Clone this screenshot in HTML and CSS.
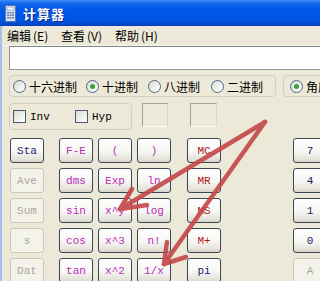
FILE: index.html
```html
<!DOCTYPE html>
<html>
<head>
<meta charset="utf-8">
<link rel="stylesheet" href="styles.css">
</head>
<body>
<div class="window">
  <div class="titlebar">
    <svg class="appicon" width="11" height="17" viewBox="0 0 11 17">
      <rect x="0.5" y="0.5" width="10" height="16" rx="1" fill="#d4e0f0" stroke="#5a78a8"/>
      <rect x="2" y="2" width="7" height="3" fill="#f4f8ff" stroke="#7890b8" stroke-width="0.6"/>
      <g fill="#6a84b0">
        <rect x="2" y="7" width="2" height="1.5"/><rect x="4.5" y="7" width="2" height="1.5"/><rect x="7" y="7" width="2" height="1.5"/>
        <rect x="2" y="9.5" width="2" height="1.5"/><rect x="4.5" y="9.5" width="2" height="1.5"/><rect x="7" y="9.5" width="2" height="1.5"/>
        <rect x="2" y="12" width="2" height="1.5"/><rect x="4.5" y="12" width="2" height="1.5"/><rect x="7" y="12" width="2" height="1.5"/>
      </g>
    </svg>
    <span class="title">计算器</span>
  </div>
  <div class="main">
    <div class="menubar">
      <span class="menu">编辑<span class="acc">(E)</span></span>
      <span class="menu">查看<span class="acc">(V)</span></span>
      <span class="menu">帮助<span class="acc">(H)</span></span>
    </div>
    <div class="content">
      <div class="display"></div>
      <div class="row radios">
        <div class="group base">
          <label class="radio w73"><span class="circle"></span>十六进制</label>
          <label class="radio w62"><span class="circle on"></span>十进制</label>
          <label class="radio w63"><span class="circle"></span>八进制</label>
          <label class="radio"><span class="circle"></span>二进制</label>
        </div>
        <div class="group angle">
          <label class="radio"><span class="circle on"></span>角度</label>
        </div>
      </div>
      <div class="row second">
        <div class="group invhyp">
          <label class="check w62"><span class="box"></span>Inv</label>
          <label class="check"><span class="box"></span>Hyp</label>
        </div>
        <div class="sunken s1"></div>
        <div class="sunken s2"></div>
      </div>
      <div class="keys">
        <div class="col stat">
          <div class="btn blue">Sta</div>
          <div class="btn off">Ave</div>
          <div class="btn off">Sum</div>
          <div class="btn off">s</div>
          <div class="btn off">Dat</div>
        </div>
        <div class="sci">
          <div class="btn pink">F-E</div>
          <div class="btn pink">(</div>
          <div class="btn pink">)</div>
          <div class="btn pink">dms</div>
          <div class="btn pink">Exp</div>
          <div class="btn pink">ln</div>
          <div class="btn pink">sin</div>
          <div class="btn pink">x^y</div>
          <div class="btn pink">log</div>
          <div class="btn pink">cos</div>
          <div class="btn pink">x^3</div>
          <div class="btn pink">n!</div>
          <div class="btn pink">tan</div>
          <div class="btn pink">x^2</div>
          <div class="btn pink">1/x</div>
        </div>
        <div class="col mem">
          <div class="btn red">MC</div>
          <div class="btn red">MR</div>
          <div class="btn red">MS</div>
          <div class="btn red">M+</div>
          <div class="btn blue">pi</div>
        </div>
        <div class="col num">
          <div class="btn blue">7</div>
          <div class="btn blue">4</div>
          <div class="btn blue">1</div>
          <div class="btn blue">0</div>
          <div class="btn off">A</div>
        </div>
      </div>
    </div>
  </div>
  <svg class="arrows" width="320" height="281" viewBox="0 0 320 281">
    <g stroke="#c44848" stroke-width="4.5" stroke-linecap="round" stroke-linejoin="round" fill="none" opacity="0.9">
      <path d="M265 122 L120 209"/>
      <path d="M120 209 L147 205"/>
      <path d="M120 209 L132 189"/>
      <path d="M265 122 L164 264"/>
      <path d="M164 264 L186 257"/>
      <path d="M164 264 L167 242"/>
    </g>
  </svg>
</div>
</body>
</html>
```

FILE: styles.css
```css
html, body {
  margin: 0;
  padding: 0;
}
body {
  width: 320px;
  height: 281px;
  overflow: hidden;
  background: #ece9d8;
  font-family: "Noto Sans CJK SC", "Noto Sans", sans-serif;
}
.window {
  position: relative;
  width: 420px;
  height: 281px;
}
.titlebar {
  height: 26px;
  display: flex;
  align-items: center;
  padding-left: 5px;
  box-sizing: border-box;
  background: linear-gradient(#3d8ef8 0%, #1468ee 12%, #0058e6 35%, #0055e3 75%, #004ed6 88%, #0040b8 100%);
}
.appicon {
  display: block;
  margin-right: 7px;
}
.title {
  color: #fff;
  font-weight: bold;
  font-size: 13px;
  letter-spacing: 1px;
  text-shadow: 1px 1px 0 #0a2a8a;
}
.main {
  border-left: 2px solid #a9c0ea;
  height: 255px;
}
.menubar {
  height: 19px;
  display: flex;
  align-items: center;
  padding-left: 5px;
  border-bottom: 1px solid #f7f6ef;
  font-size: 12px;
  color: #000;
}
.menu {
  width: 54px;
  white-space: nowrap;
}
.acc {
  margin-left: 2px;
}
.content {
  padding-left: 7px;
}
.display {
  width: 400px;
  height: 22px;
  background: #fff;
  border: 1px solid #8f9a9c;
  border-top-color: #7d8688;
}
.row {
  display: flex;
}
.radios {
  margin-top: 5px;
}
.group {
  box-sizing: border-box;
  border: 1px solid #d0d0bf;
  border-radius: 4px;
  display: flex;
  align-items: center;
}
.base {
  width: 267px;
  height: 22px;
  padding-left: 3px;
}
.angle {
  margin-left: 7px;
  width: 120px;
  height: 22px;
  padding-left: 6px;
}
.radio, .check {
  display: flex;
  align-items: center;
  font-size: 12px;
  white-space: nowrap;
}
.w73 { width: 73px; }
.w62 { width: 62px; }
.w63 { width: 63px; }
.circle {
  width: 11px;
  height: 11px;
  border: 1px solid #4a6688;
  border-radius: 50%;
  background: linear-gradient(135deg, #dcdcd4, #ffffff);
  margin-right: 3px;
  position: relative;
  flex: none;
}
.circle.on::after {
  content: "";
  position: absolute;
  left: 3px;
  top: 3px;
  width: 5px;
  height: 5px;
  border-radius: 50%;
  background: #35a535;
}
.second {
  margin-top: 6px;
  align-items: flex-start;
}
.invhyp {
  width: 123px;
  height: 27px;
  padding-left: 3px;
}
.check {
  font-family: "Liberation Mono", "DejaVu Sans Mono", monospace;
  font-size: 11px;
}
.box {
  width: 11px;
  height: 11px;
  border: 1px solid #4a5a70;
  background: linear-gradient(135deg, #dcdcd4, #ffffff);
  margin-right: 4px;
  flex: none;
}
.sunken {
  box-sizing: border-box;
  height: 24px;
  border: 1px solid #a2a091;
  border-right-color: #d8d6c8;
  border-bottom-color: #fbfaf4;
}
.s1 {
  margin-left: 10px;
  width: 26px;
}
.s2 {
  margin-left: 22px;
  width: 27px;
}
.keys {
  margin-top: 8px;
  display: flex;
  align-items: flex-start;
}
.col {
  display: flex;
  flex-direction: column;
  gap: 5px;
}
.stat {
  margin-left: 1px;
}
.sci {
  margin-left: 15px;
  display: grid;
  grid-template-columns: 34px 34px 34px;
  column-gap: 5px;
  row-gap: 5px;
}
.mem {
  margin-left: 16px;
}
.num {
  margin-left: 72px;
}
.btn {
  box-sizing: border-box;
  width: 34px;
  height: 25px;
  border: 1px solid #3a4654;
  border-radius: 3px;
  background: linear-gradient(#ffffff 0%, #f6f6f2 55%, #e6e4dc 85%, #d8d4c8 100%);
  display: flex;
  align-items: center;
  justify-content: center;
  font-family: "Liberation Mono", "DejaVu Sans Mono", monospace;
  font-size: 11px;
  white-space: nowrap;
}
.pink { color: #bb2cbb; }
.red { color: #b01818; }
.blue { color: #1c2270; }
.off {
  color: #aca899;
  border-color: #cac8bb;
  background: #f4f3ea;
}
.arrows {
  position: absolute;
  left: 0;
  top: 0;
  pointer-events: none;
}
```
